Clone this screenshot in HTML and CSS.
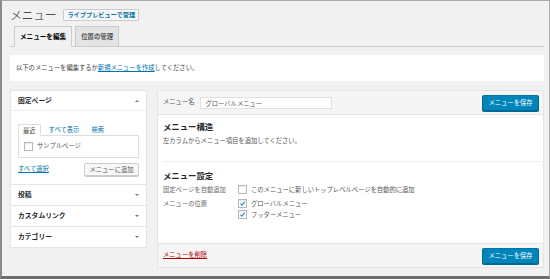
FILE: index.html
```html
<!DOCTYPE html>
<html lang="ja">
<head>
<meta charset="utf-8">
<link rel="stylesheet" href="styles.css">
</head>
<body>
<div class="frame">
  <div class="head">
    <h1 class="title">メニュー</h1>
    <span class="page-action">ライブプレビューで管理</span>
  </div>
  <div class="tabs">
    <span class="tab active">メニューを編集</span>
    <span class="tab">位置の管理</span>
  </div>
  <div class="notice">以下のメニューを編集するか<span class="link">新規メニューを作成</span>してください。</div>
  <div class="cols">
    <div class="side">
      <div class="acc">
        <div class="acc-head"><span>固定ページ</span><i class="arrow up"></i></div>
        <div class="acc-body">
          <div class="subtabs">
            <span class="subtab active">最近</span>
            <span class="subtab link plain">すべて表示</span>
            <span class="subtab link plain">検索</span>
          </div>
          <div class="list">
            <div class="chk"><span class="box"></span><span>サンプルページ</span></div>
          </div>
          <div class="acc-actions">
            <span class="link">すべて選択</span>
            <span class="btn">メニューに追加</span>
          </div>
        </div>
      </div>
      <div class="acc closed"><div class="acc-head"><span>投稿</span><i class="arrow down"></i></div></div>
      <div class="acc closed"><div class="acc-head"><span>カスタムリンク</span><i class="arrow down"></i></div></div>
      <div class="acc closed"><div class="acc-head"><span>カテゴリー</span><i class="arrow down"></i></div></div>
    </div>
    <div class="main">
      <div class="main-head">
        <span class="name-label">メニュー名</span>
        <span class="input">グローバルメニュー</span>
        <span class="btn primary">メニューを保存</span>
      </div>
      <div class="main-body">
        <h3 class="sec-title">メニュー構造</h3>
        <p class="desc">左カラムからメニュー項目を追加してください。</p>
        <div class="settings">
          <h3 class="sec-title">メニュー設定</h3>
          <div class="row">
            <span class="lbl">固定ページを自動追加</span>
            <div class="chk"><span class="box"></span><span>このメニューに新しいトップレベルページを自動的に追加</span></div>
          </div>
          <div class="row">
            <span class="lbl">メニューの位置</span>
            <div class="chks">
              <div class="chk"><span class="box checked"><svg viewBox="0 0 10 10"><path d="M2 5.2 L4.2 7.4 L8.2 2.4" fill="none" stroke="#1e8cbe" stroke-width="1.6"/></svg></span><span>グローバルメニュー</span></div>
              <div class="chk"><span class="box checked"><svg viewBox="0 0 10 10"><path d="M2 5.2 L4.2 7.4 L8.2 2.4" fill="none" stroke="#1e8cbe" stroke-width="1.6"/></svg></span><span>フッターメニュー</span></div>
            </div>
          </div>
        </div>
      </div>
      <div class="main-foot">
        <span class="delete">メニューを削除</span>
        <span class="btn primary">メニューを保存</span>
      </div>
    </div>
  </div>
</div>
</body>
</html>
```
FILE: styles.css
```css
* { box-sizing: border-box; }
html, body { margin: 0; padding: 0; }
body {
  font-family: "Noto Sans CJK JP", "Noto Sans", sans-serif;
  color: #555;
  font-size: 6.3px;
  line-height: 1.4;
  white-space: nowrap;
}
.frame {
  width: 550px;
  height: 279px;
  background: #f1f1f1;
  border: 1px solid #a8a8a8;
  border-left: 2px solid #8a8a8a;
  border-bottom: 3px solid #6e6e6e;
  padding: 0 5px 0 8px;
}
.head {
  display: flex;
  align-items: center;
  height: 16px;
  margin-top: 6px;
}
.title {
  font-size: 12px;
  font-weight: 300;
  color: #23282d;
  margin: 0;
  line-height: 16px;
  letter-spacing: -0.4px;
}
.page-action {
  margin-left: 7px;
  height: 12px;
  line-height: 10px;
  padding: 0 3px;
  border: 1px solid #ccc;
  background: #f7f7f7;
  color: #0073aa;
  font-weight: 700;
  font-size: 6.2px;
  border-radius: 1px;
}
.tabs {
  display: flex;
  gap: 3px;
  padding-left: 4px;
  margin-top: 3px;
  border-bottom: 1px solid #ccc;
  height: 21px;
  align-items: flex-end;
}
.tab {
  height: 21px;
  margin-bottom: -1px;
  padding: 0 5px;
  line-height: 19px;
  border: 1px solid #ccc;
  background: #e4e4e4;
  color: #555;
  font-weight: 700;
  font-size: 6.4px;
}
.tab.active {
  background: #f1f1f1;
  border-bottom-color: #f1f1f1;
  color: #000;
  font-size: 6.6px;
}
.notice {
  margin-top: 8px;
  height: 26px;
  line-height: 26px;
  background: #fff;
  padding-left: 6px;
  color: #444;
}
.link { color: #0073aa; text-decoration: underline; }
.plain { text-decoration: none; }
.cols {
  display: flex;
  gap: 10px;
  margin-top: 9px;
  align-items: flex-start;
}
.side {
  width: 137px;
  flex: none;
  background: #fff;
  border: 1px solid #e5e5e5;
}
.acc + .acc { border-top: 1px solid #e5e5e5; }
.acc-head {
  display: flex;
  justify-content: space-between;
  align-items: center;
  height: 20px;
  padding: 0 7px 0 7px;
  font-weight: 700;
  font-size: 6.8px;
  color: #23282d;
}
.acc:first-child .acc-head { border-bottom: 1px solid #eee; }
.arrow {
  width: 0; height: 0;
  border-left: 2px solid transparent;
  border-right: 2px solid transparent;
}
.arrow.up { border-bottom: 2.5px solid #72777c; }
.arrow.down { border-top: 2.5px solid #72777c; }
.acc-body {
  padding: 12px 7px 8px;
}
.subtabs {
  display: flex;
  align-items: flex-end;
  height: 12px;
}
.subtab {
  padding: 0 4px;
  line-height: 11px;
  height: 12px;
  margin-bottom: -1px;
  position: relative;
}
.subtab.active {
  border: 1px solid #ddd;
  border-bottom-color: #fff;
  background: #fff;
  color: #444;
}
.subtabs .subtab + .subtab { margin-left: 4px; }
.list {
  border: 1px solid #ddd;
  height: 23px;
  display: flex;
  align-items: center;
  padding-left: 5px;
}
.chk {
  display: flex;
  align-items: center;
  gap: 4px;
  color: #555;
}
.box {
  width: 9px;
  height: 9px;
  flex: none;
  border: 1px solid #b4b9be;
  background: #fff;
  box-shadow: inset 0 1px 1px rgba(0,0,0,0.08);
  display: flex;
}
.box svg { width: 100%; height: 100%; }
.acc-actions {
  display: flex;
  justify-content: space-between;
  align-items: center;
  margin-top: 5px;
}
.btn {
  height: 13px;
  line-height: 11px;
  padding: 0 3px;
  border: 1px solid #ccc;
  background: #f7f7f7;
  color: #555;
  border-radius: 2px;
  font-size: 6.3px;
  box-shadow: 0 1px 0 #ccc;
}
.acc-actions .btn { width: 55px; text-align: center; }
.btn.primary {
  background: #0085ba;
  border-color: #0073aa #006799 #006799;
  color: #fff;
  height: 16px;
  line-height: 14px;
  width: 57px;
  text-align: center;
  box-shadow: 0 1px 0 #006799;
}
.main {
  flex: 1;
  border: 1px solid #e5e5e5;
  background: #fff;
}
.main-head {
  height: 24px;
  background: #f5f5f5;
  border-bottom: 1px solid #e5e5e5;
  display: flex;
  align-items: center;
  padding: 0 4px 0 5px;
}
.name-label { color: #555; }
.input {
  margin-left: 6px;
  width: 132px;
  height: 12px;
  line-height: 11px;
  background: #fff;
  border: 1px solid #e0e0e0;
  padding-left: 4px;
  color: #555;
}
.main-head .btn.primary { margin-left: auto; }
.main-body {
  background: #fff;
  height: 128px;
  padding: 6px 3px 0 5px;
}
.sec-title {
  margin: 0;
  font-size: 8.4px;
  font-weight: 700;
  color: #23282d;
  line-height: 11px;
}
.desc { margin: 4px 0 0; line-height: 9px; color: #555; }
.settings {
  margin-top: 16px;
  border-top: 1px solid #eee;
  padding-top: 8px;
}
.row { display: flex; align-items: flex-start; margin-top: 4px; }
.row + .row { margin-top: 5px; }
.lbl { width: 75px; flex: none; color: #666; line-height: 9px; }
.chks { display: flex; flex-direction: column; gap: 2px; }
.row .chk { line-height: 9px; }
.main-foot {
  height: 24px;
  background: #f5f5f5;
  border-top: 1px solid #e5e5e5;
  display: flex;
  align-items: center;
  padding: 0 4px 0 5px;
}
.delete { color: #a00; text-decoration: underline; }
.main-foot .btn.primary { margin-left: auto; }
```
